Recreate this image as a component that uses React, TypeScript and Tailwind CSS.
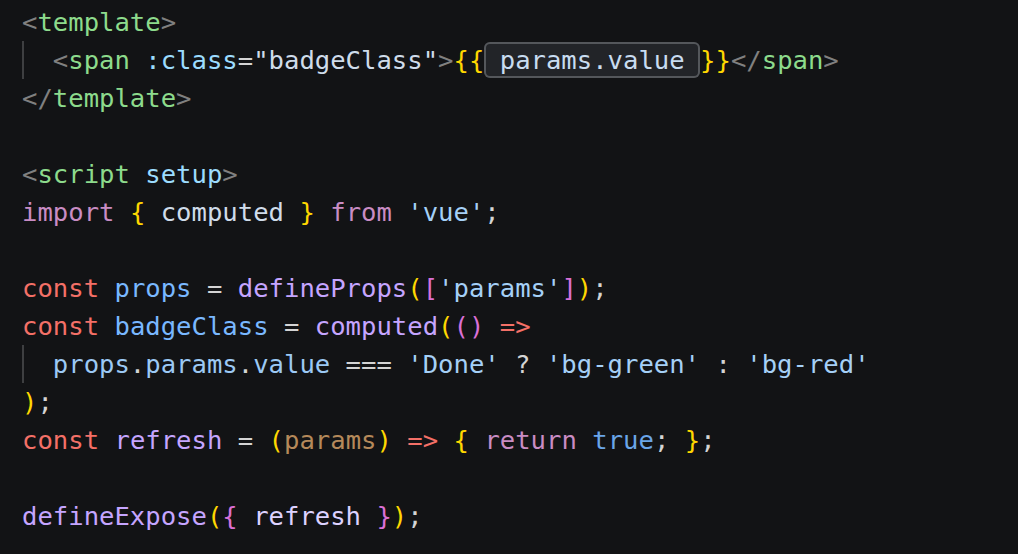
type Tok = [string, string];

const P = "text-[#808080]";
const TAG = "text-[#8ddb8c]";
const ATTR = "text-[#9cdcfe]";
const PALE = "text-[#cfdcea]";
const W = "text-[#d4d4d4]";
const KW = "text-[#f47067]";
const IMP = "text-[#c98cc4]";
const VAR = "text-[#79b8ff]";
const VAR2 = "text-[#9cc9f4]";
const FN = "text-[#c5a5ff]";
const FN2 = "text-[#ddd2ff]";
const STR = "text-[#a5d0f7]";
const Y = "text-[#ffd700]";
const PU = "text-[#da70d6]";
const PARAM = "text-[#b5895a]";
const BOOL = "text-[#6aa5e8]";

const lines: { indent?: boolean; toks: Tok[] }[] = [
  { toks: [["<", P], ["template", TAG], [">", P]] },
  {
    indent: true,
    toks: [
      ["<", P],
      ["span", TAG],
      [" ", W],
      [":class", ATTR],
      ["=", W],
      ['"badgeClass"', PALE],
      [">", P],
      ["{{", Y],
      ["BOX", ""],
      ["}}", Y],
      ["</", P],
      ["span", TAG],
      [">", P],
    ],
  },
  { toks: [["</", P], ["template", TAG], [">", P]] },
  { toks: [] },
  { toks: [["<", P], ["script", TAG], [" ", W], ["setup", ATTR], [">", P]] },
  {
    toks: [
      ["import", IMP],
      [" ", W],
      ["{", Y],
      [" computed ", PALE],
      ["}", Y],
      [" ", W],
      ["from", IMP],
      [" ", W],
      ["'vue'", STR],
      [";", W],
    ],
  },
  { toks: [] },
  {
    toks: [
      ["const", KW],
      [" ", W],
      ["props", VAR],
      [" = ", W],
      ["defineProps", FN],
      ["(", Y],
      ["[", PU],
      ["'params'", STR],
      ["]", PU],
      [")", Y],
      [";", W],
    ],
  },
  {
    toks: [
      ["const", KW],
      [" ", W],
      ["badgeClass", VAR],
      [" = ", W],
      ["computed", FN],
      ["(", Y],
      ["()", PU],
      [" ", W],
      ["=>", KW],
    ],
  },
  {
    indent: true,
    toks: [
      ["props", VAR2],
      [".", W],
      ["params", VAR2],
      [".", W],
      ["value", VAR2],
      [" === ", W],
      ["'Done'", STR],
      [" ? ", W],
      ["'bg-green'", STR],
      [" : ", W],
      ["'bg-red'", STR],
    ],
  },
  { toks: [[")", Y], [";", W]] },
  {
    toks: [
      ["const", KW],
      [" ", W],
      ["refresh", FN],
      [" = ", W],
      ["(", Y],
      ["params", PARAM],
      [")", Y],
      [" ", W],
      ["=>", KW],
      [" ", W],
      ["{", Y],
      [" ", W],
      ["return", IMP],
      [" ", W],
      ["true", BOOL],
      ["; ", W],
      ["}", Y],
      [";", W],
    ],
  },
  { toks: [] },
  {
    toks: [
      ["defineExpose", FN],
      ["(", Y],
      ["{", PU],
      [" refresh ", FN2],
      ["}", PU],
      [")", Y],
      [";", W],
    ],
  },
];

export default function App() {
  return (
    <div
      className="w-[1018px] h-[554px] overflow-hidden bg-[#121315] pt-[3px] pl-[22px] text-[25.6px] whitespace-pre"
      style={{ fontFamily: '"DejaVu Sans Mono", "Liberation Mono", monospace' }}
    >
      {lines.map((ln, i) => (
        <div key={i} className="flex h-[38px] items-center">
          {ln.indent && <span className="h-[38px] w-[2ch] border-l-2 border-[#3e3f41]" />}
          {ln.toks.map(([t, cls], j) =>
            t === "BOX" ? (
              <span
                key={j}
                className="inline-flex h-[36px] items-center rounded-md bg-[#222428] text-[#c8dcf0] shadow-[inset_0_0_0_2px_#54575b]"
              >
                {" params.value "}
              </span>
            ) : (
              <span key={j} className={cls}>
                {t}
              </span>
            )
          )}
        </div>
      ))}
    </div>
  );
}
